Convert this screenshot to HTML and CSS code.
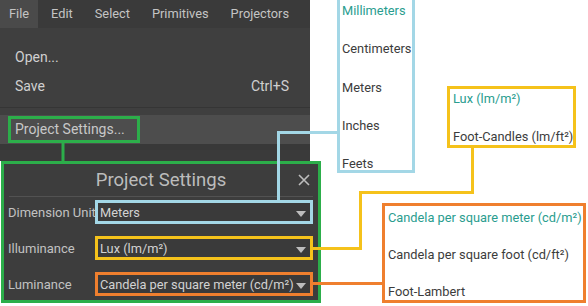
FILE: index.html
```html
<!DOCTYPE html>
<html>
  <head>
    <meta charset="utf-8" />
    <link rel="stylesheet" href="styles.css">
  </head>
  <body>
    <div class="app">
      <div class="menubar">
        <span class="menubar-item active">File</span>
        <span class="menubar-item">Edit</span>
        <span class="menubar-item">Select</span>
        <span class="menubar-item">Primitives</span>
        <span class="menubar-item">Projectors</span>
      </div>

      <div class="menu">
        <div class="menu-item"><span>Open...</span></div>
        <div class="menu-item"><span>Save</span><span>Ctrl+S</span></div>
        <div class="menu-sep"></div>
        <div class="menu-item hover">
          <span class="mark mark-green">Project Settings...</span>
        </div>
        <div class="menu-tail"></div>
      </div>

      <div class="dialog">
        <div class="dialog-head">
          <span></span>
          <span class="dialog-title">Project Settings</span>
          <svg class="dialog-close" width="12" height="12" viewBox="0 0 12 12">
            <path d="M1 1 L11 11 M11 1 L1 11" stroke="#bdbdbd" stroke-width="1.6" fill="none" />
          </svg>
        </div>
        <div class="dialog-body">
          <label class="field-label">Dimension Unit</label>
          <div class="select mark-blue">
            <span>Meters</span><span class="arrow"></span>
          </div>

          <label class="field-label">Illuminance</label>
          <div class="select mark-yellow">
            <span>Lux (lm/m²)</span><span class="arrow"></span>
          </div>

          <label class="field-label">Luminance</label>
          <div class="select mark-orange">
            <span>Candela per square meter (cd/m²)</span><span class="arrow"></span>
          </div>
        </div>
      </div>
    </div>

    <!-- option lists shown next to the dialog -->
    <ul class="options options-units mark-blue">
      <li class="selected">Millimeters</li>
      <li>Centimeters</li>
      <li>Meters</li>
      <li>Inches</li>
      <li>Feets</li>
    </ul>

    <ul class="options options-lux mark-yellow">
      <li class="selected">Lux (lm/m²)</li>
      <li>Foot-Candles (lm/ft²)</li>
    </ul>

    <ul class="options options-lum mark-orange">
      <li class="selected">Candela per square meter (cd/m²)</li>
      <li>Candela per square foot (cd/ft²)</li>
      <li>Foot-Lambert</li>
    </ul>

    <svg class="connectors" width="588" height="306" viewBox="0 0 588 306">
      <path d="M63 143 V162" stroke="#2cae4a" />
      <path d="M278.5 201 V132.5 H338" stroke="#a3d7e6" />
      <path d="M313 248.5 H360.5 V192.5 H472.5 V147" stroke="#f5c21b" />
      <path d="M313 283.5 H383" stroke="#ef7f2e" />
    </svg>
  </body>
</html>
```

FILE: styles.css
```css
body {
  position: relative;
  width: 588px;
  height: 306px;
  margin: 0;
  overflow: hidden;
  background: white;
  font-family: Roboto, "Liberation Sans", sans-serif;
  font-size: 13px;
}

.app {
  width: 310px;
}

.menubar {
  display: flex;
  gap: 4px;
  height: 28px;
  background: #3a3a3a;
  color: #c4c4c4;
  font-size: 12.8px;
}

.menubar-item {
  padding: 0 9px;
  line-height: 28px;
}

.menubar-item.active {
  background: #4a4a4a;
}

.menu {
  padding-top: 15px;
  background: #3f3f3f;
  color: #d0d0d0;
  font-size: 14px;
}

.menu-item {
  display: flex;
  justify-content: space-between;
  height: 29px;
  line-height: 29px;
  padding: 0 21px 0 15px;
}

.menu-sep {
  height: 1px;
  margin: 6px 0 7px;
  background: #353535;
}

.menu-item.hover {
  align-items: center;
  padding-left: 8px;
  background: #4d4d4d;
  color: #c8c8c8;
}

.menu-tail {
  height: 17px;
  background: #3a3a3a;
  border-top: 6px solid #383838;
  box-sizing: border-box;
}

.mark-green {
  display: inline-block;
  box-sizing: border-box;
  height: 27px;
  line-height: 21px;
  padding: 0 12px 0 4px;
  border: 3px solid #2cae4a;
}

.dialog {
  width: 320px;
  margin-left: 1px;
  box-sizing: border-box;
  border: 3px solid #2cae4a;
  background: #3d3d3d;
}

.dialog-head {
  display: grid;
  grid-template-columns: 1fr auto 1fr;
  align-items: center;
  height: 32px;
  margin: 0 5px;
  border-bottom: 1px solid #525252;
}

.dialog-title {
  font-size: 18.5px;
  color: #bcbcbc;
}

.dialog-close {
  justify-self: end;
  margin-right: 3px;
}

.dialog-body {
  display: grid;
  grid-template-columns: 91px 1fr;
  row-gap: 12px;
  align-items: center;
  padding: 3px 5px 4px 0;
}

.field-label {
  padding-left: 4px;
  color: #c2c2c2;
  white-space: nowrap;
}

.select {
  display: flex;
  align-items: center;
  justify-content: space-between;
  box-sizing: border-box;
  height: 24px;
  padding: 0 4px 0 2px;
  background: #3a3a3a;
  color: #d2d2d2;
  font-size: 12.8px;
  white-space: nowrap;
}

.arrow {
  flex-shrink: 0;
  width: 0;
  height: 0;
  margin-top: 3px;
  border-left: 5px solid transparent;
  border-right: 5px solid transparent;
  border-top: 6px solid #bdbdbd;
}

.mark-blue {
  border: 3px solid #a3d7e6;
}

.mark-yellow {
  border: 3px solid #f5c21b;
}

.mark-orange {
  border: 3px solid #ef7f2e;
}

.options {
  position: absolute;
  display: flex;
  flex-direction: column;
  gap: 22.3px;
  margin: 0;
  padding: 0;
  list-style: none;
  background: white;
  color: #3c3c3c;
  box-sizing: border-box;
  font-size: 12.8px;
}

.options li {
  line-height: 16px;
  white-space: nowrap;
}

.options .selected {
  color: #2a9d8f;
}

.options-units {
  left: 337px;
  top: -3px;
  width: 78px;
  height: 176px;
  padding: 3px 0 0 2px;
}

.options-lux {
  left: 447px;
  top: 86px;
  width: 129px;
  height: 62px;
  gap: 22px;
  padding: 2px 0 0 3px;
}

.options-lum {
  left: 382px;
  top: 203px;
  width: 204px;
  height: 100px;
  gap: 21px;
  padding: 4px 0 0 3px;
}

.connectors {
  position: absolute;
  left: 0;
  top: 0;
  pointer-events: none;
  fill: none;
  stroke-width: 3;
}
```
